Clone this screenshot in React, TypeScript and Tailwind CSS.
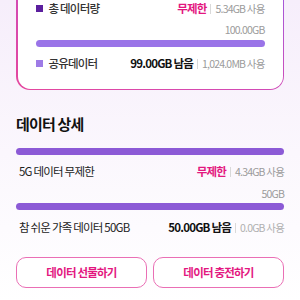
const font = { fontFamily: '"Noto Sans CJK KR", "Noto Sans", sans-serif' };

function Sep() {
    return <span className="mx-[4px] inline-block h-[10px] w-px bg-[#d9d9d9]"></span>;
}

function Bar({ color }: { color: string }) {
    return <div className={`h-[7px] w-full rounded-full ${color}`}></div>;
}

export default function App() {
    return (
        <div
            className="min-h-[300px] overflow-hidden bg-gradient-to-b from-[#f6eefb] via-[#fbf7fd] to-white px-[16px] pb-4 tracking-[-0.05em]"
            style={font}
        >
            {/* summary card, its top is scrolled off */}
            <div className="-mt-[20px] rounded-[14px] bg-gradient-to-tr from-[#e5469d] via-[#d04ab8] to-[#9c58e0] p-[1.5px]">
                <div className="rounded-[12.5px] bg-white px-[18px] pt-[18px] pb-[16px]">
                    <div className="flex h-[18px] items-center">
                        <span className="h-[7px] w-[7px] bg-[#5b1f9e]"></span>
                        <span className="ml-[6px] text-[11.5px] font-medium text-[#333]">총 데이터량</span>
                        <span className="ml-auto text-[11.5px] font-bold text-[#e3177f]">무제한</span>
                        <Sep />
                        <span className="text-[10.5px] text-[#9b9b9b]">5.34GB 사용</span>
                    </div>
                    <div className="mt-[5px] text-right text-[10.5px] leading-[14px] text-[#9b9b9b]">100.00GB</div>
                    <div className="mt-[3px]">
                        <Bar color="bg-[#9a74e8]" />
                    </div>
                    <div className="mt-[8px] flex h-[18px] items-center">
                        <span className="h-[7px] w-[7px] bg-[#9e7be6]"></span>
                        <span className="ml-[6px] text-[11.5px] font-medium text-[#333]">공유데이터</span>
                        <span className="ml-auto text-[11.5px] font-bold text-[#111]">99.00GB 남음</span>
                        <Sep />
                        <span className="text-[10.5px] text-[#9b9b9b]">1,024.0MB 사용</span>
                    </div>
                </div>
            </div>

            <h2 className="mt-[23px] text-[15px] leading-[22px] font-bold text-[#111]">데이터 상세</h2>

            <div className="mt-[13px]">
                <Bar color="bg-[#8c5ad6]" />
            </div>
            <div className="mt-[8px] flex h-[18px] items-center pl-[3px]">
                <span className="text-[11.5px] text-[#222]">5G 데이터 무제한</span>
                <span className="ml-auto text-[11.5px] font-bold text-[#e3177f]">무제한</span>
                <Sep />
                <span className="text-[10.5px] text-[#9b9b9b]">4.34GB 사용</span>
            </div>
            <div className="mt-[6px] text-right text-[10.5px] leading-[14px] text-[#9b9b9b]">50GB</div>
            <div className="mt-[2px]">
                <Bar color="bg-[#8c5ad6]" />
            </div>
            <div className="mt-[9px] flex h-[18px] items-center pl-[3px]">
                <span className="text-[11.5px] text-[#222]">참 쉬운 가족 데이터 50GB</span>
                <span className="ml-auto text-[11.5px] font-bold text-[#111]">50.00GB 남음</span>
                <Sep />
                <span className="text-[10.5px] text-[#b0b0b0]">0.0GB 사용</span>
            </div>

            <div className="mt-[20px] grid grid-cols-2 gap-[6px]">
                <button className="h-[31px] rounded-[10px] border-[1.5px] border-[#ea6fb5] bg-white text-[11.5px] font-bold text-[#e3177f]">
                    데이터 선물하기
                </button>
                <button className="h-[31px] rounded-[10px] border-[1.5px] border-[#ea6fb5] bg-white text-[11.5px] font-bold text-[#e3177f]">
                    데이터 충전하기
                </button>
            </div>
        </div>
    );
}
